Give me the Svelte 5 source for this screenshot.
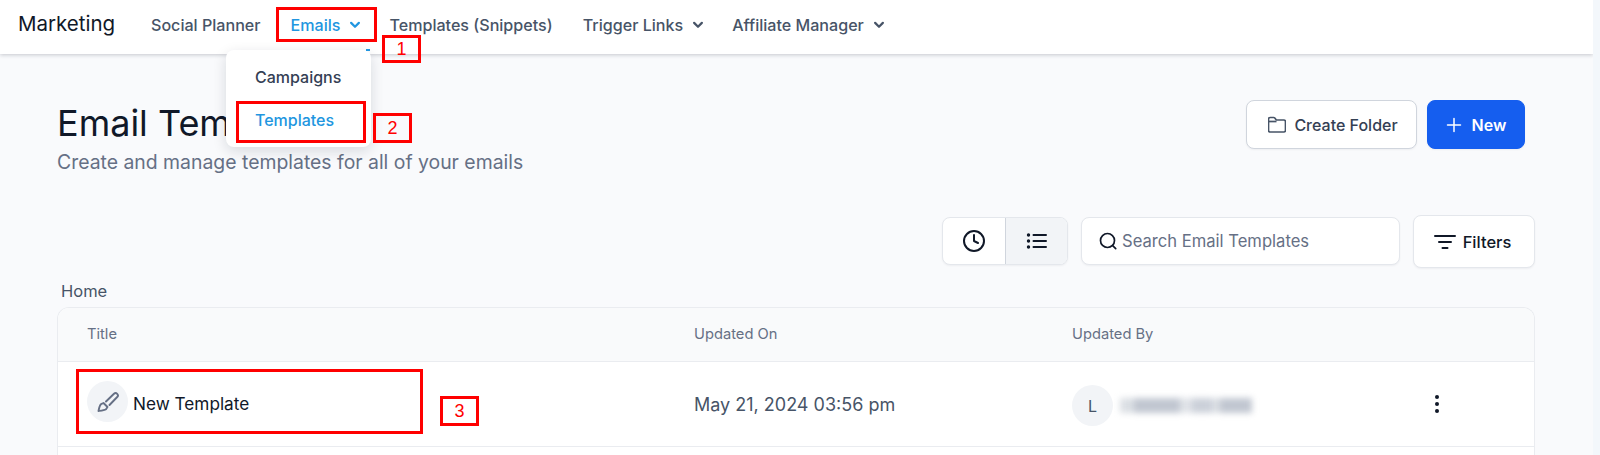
<script>
  const tabs = [
    { label: 'Social Planner' },
    { label: 'Emails', caret: true, active: true },
    { label: 'Templates (Snippets)' },
    { label: 'Trigger Links', caret: true },
    { label: 'Affiliate Manager', caret: true }
  ];
  const marks = [
    { n: 1, cls: 'tag-1' },
    { n: 2, cls: 'tag-2' },
    { n: 3, cls: 'tag-3' }
  ];
  const smudge = [
    { w: 14, o: 0.35 }, { w: 46, o: 0.6 }, { w: 12, o: 0.3 }, { w: 20, o: 0.5 }, { w: 8, o: 0.35 }, { w: 32, o: 0.6 }
  ];
</script>

<div class="page">
  <header class="topbar">
    <span class="brand">Marketing</span>
    <nav class="tabs">
      {#each tabs as tab}
        <span class="tab" class:active={tab.active}>
          {tab.label}
          {#if tab.caret}
            <svg width="12" height="8" viewBox="-1 0 14 8" fill="none">
              <path d="M1.500 1.500 6 6l4.500-4.500" stroke="currentColor" stroke-width="2.600" stroke-linecap="round" stroke-linejoin="round" />
            </svg>
          {/if}
        </span>
      {/each}
    </nav>
  </header>

  <main class="content">
    <div class="head">
      <div>
        <h1>Email Templates</h1>
        <p>Create and manage templates for all of your emails</p>
      </div>
      <div class="head-actions">
        <button class="btn folder">
          <svg width="18" height="20" viewBox="1 0 18 20" fill="none" stroke="#475467" stroke-width="1.700" stroke-linejoin="round">
            <path d="M1.500 4.200c0-1 .7-1.700 1.700-1.700h3.400c.5 0 .9.2 1.200.5l1.500 2h7.500c1 0 1.700.7 1.700 1.700v8.600c0 1-.7 1.700-1.700 1.700H3.200c-1 0-1.700-.7-1.700-1.700z" />
            <path d="M1.500 6.500h8" />
          </svg>
          Create Folder
        </button>
        <button class="btn primary">
          <svg width="16" height="16" viewBox="0 0 16 16" fill="none" stroke="#fff" stroke-width="1.500" stroke-linecap="round">
            <path d="M8 1.500v13M1.500 8h13" />
          </svg>
          New
        </button>
      </div>
    </div>

    <div class="toolbar">
      <div class="segment">
        <span class="seg">
          <svg width="24" height="24" viewBox="0 0 24 24" fill="none" stroke="#101828" stroke-width="2" stroke-linecap="round" stroke-linejoin="round">
            <circle cx="12" cy="12" r="10" />
            <path d="M12 6v6l4 2" />
          </svg>
        </span>
        <span class="seg on">
          <svg width="24" height="24" viewBox="0 0 24 24" fill="none" stroke="#101828" stroke-width="2" stroke-linecap="round">
            <path d="M8.500 6H21M8.500 12H21M8.500 18H21" />
            <path d="M3.500 6h.01M3.500 12h.01M3.500 18h.01" stroke-width="3.400" />
          </svg>
        </span>
      </div>
      <div class="search">
        <svg width="20" height="20" viewBox="0 0 20 20" fill="none" stroke="#101828" stroke-width="1.700" stroke-linecap="round">
          <circle cx="9.500" cy="9.500" r="7" />
          <path d="m14.700 14.700 3 3" />
        </svg>
        <span>Search Email Templates</span>
      </div>
      <button class="btn filters">
        <svg width="22" height="22" viewBox="0 0 22 22" fill="none" stroke="#101828" stroke-width="2" stroke-linecap="round">
          <path d="M1 5h20M5 11h12M8.500 17h5" />
        </svg>
        Filters
      </button>
    </div>

    <div class="crumb">Home</div>

    <div class="table">
      <div class="row thead">
        <span class="col-title">Title</span>
        <span class="col-date">Updated On</span>
        <span class="col-user">Updated By</span>
      </div>
      <div class="row tbody">
        <span class="col-title name">
          <span class="avatar brush">
            <svg width="24" height="24" viewBox="0 0 24 24" fill="none" stroke="#667085" stroke-width="1.900" stroke-linecap="round" stroke-linejoin="round">
              <path d="M10 11.500 18 3.800a2.200 2.200 0 0 1 3.200 3.200L13.500 15" />
              <path d="M7.500 13l4 4-1.500 2.200c-1.500 1-4 1.300-7.500 1.800.5-3 1-5.500 2.500-6.800z" />
            </svg>
          </span>
          New Template
        </span>
        <span class="col-date when">May 21, 2024 03:56 pm</span>
        <span class="col-user who">
          <span class="avatar small">L</span>
          <span class="smudge">
            {#each smudge as s}
              <i style="width: {s.w}px; opacity: {s.o}"></i>
            {/each}
          </span>
        </span>
        <span class="dots"><i></i><i></i><i></i></span>
      </div>
    </div>
  </main>

  <!-- dropdown and the screenshot's red markup sit over the page -->
  <div class="menu">
    <span class="menu-item">Campaigns</span>
    <span class="menu-item current">Templates</span>
  </div>
  <span class="tick"></span>
  <span class="box box-1"></span>
  <span class="box box-2"></span>
  <span class="box box-3"></span>
  {#each marks as m}
    <span class="tag {m.cls}">{m.n}</span>
  {/each}
</div>

<style>
  :global(body) {
    margin: 0;
    background: #f3f7fb;
    font-family: Inter, "Liberation Sans", sans-serif;
    overflow: hidden;
  }
  .page {
    position: relative;
    width: 1593px;
    height: 455px;
    overflow: hidden;
    box-sizing: border-box;
    background: #f9fafc;
  }
  .topbar {
    display: flex;
    align-items: center;
    height: 54px;
    padding-left: 18px;
    background: #fff;
    box-shadow: 0 1px 4px rgba(16, 24, 40, 0.22);
  }
  .brand {
    font-size: 20.500px;
    font-weight: 400;
    color: #101828;
    margin-top: -8px;
    width: 133px;
  }
  .tabs {
    display: flex;
    align-items: center;
    gap: 30px;
    margin-top: -4px;
  }
  .tab {
    display: flex;
    align-items: center;
    gap: 9px;
    font-size: 16.100px;
    font-weight: 500;
    color: #475467;
  }
  .tab svg {
    margin-right: -2px;
  }
  .tab.active {
    color: #2196e0;
  }
  .content {
    padding: 47px 58px 0 57px;
  }
  .head {
    display: flex;
    justify-content: space-between;
    align-items: flex-start;
  }
  h1 {
    margin: 0;
    font-size: 36px;
    line-height: 44px;
    font-weight: 400;
    color: #101828;
  }
  .head p {
    margin: 5px 0 0;
    font-size: 19.400px;
    line-height: 24px;
    color: #667085;
  }
  .head-actions {
    display: flex;
    gap: 10px;
    margin: -1px 10px 0 0;
  }
  .btn {
    display: flex;
    align-items: center;
    justify-content: center;
    gap: 8px;
    height: 49px;
    border: 1px solid #d0d5dd;
    border-radius: 8px;
    background: #fff;
    font: 500 16px Inter, "Liberation Sans", sans-serif;
    color: #344054;
    box-shadow: 0 1px 2px rgba(16, 24, 40, 0.05);
  }
  .folder {
    width: 171px;
    padding: 0 0 0 3px;
  }
  .primary {
    width: 98px;
    background: #155eef;
    border-color: #155eef;
    color: #fff;
    font-weight: 600;
    gap: 10px;
  }
  .toolbar {
    display: flex;
    align-items: center;
    justify-content: flex-end;
    margin-top: 41px;
    height: 53px;
  }
  .segment {
    display: flex;
    width: 126px;
    height: 48px;
    margin-bottom: 1px;
    box-sizing: border-box;
    border: 1px solid #e4e7ec;
    border-radius: 8px;
    background: #fff;
    overflow: hidden;
    box-shadow: 0 1px 2px rgba(16, 24, 40, 0.05);
  }
  .seg {
    display: flex;
    align-items: center;
    justify-content: center;
    flex: 1 0 50%;
  }
  .seg.on {
    background: #f2f4f7;
    border-left: 1px solid #d0d5dd;
  }
  .search {
    display: flex;
    align-items: center;
    gap: 4px;
    box-sizing: border-box;
    width: 319px;
    height: 48px;
    margin: 0 0 1px 13px;
    padding-left: 16px;
    border: 1px solid #e4e7ec;
    border-radius: 8px;
    background: #fff;
    font-size: 16.600px;
    color: #667085;
    box-shadow: 0 1px 2px rgba(16, 24, 40, 0.05);
  }
  .filters {
    box-sizing: border-box;
    width: 122px;
    height: 53px;
    margin-left: 13px;
    padding: 0 3px 0 0;
    border-color: #e4e7ec;
    color: #101828;
    font-size: 16.500px;
    gap: 7px;
  }
  .crumb {
    margin: 13px 0 0 4px;
    font-size: 16.500px;
    line-height: 20px;
    color: #475467;
  }
  .table {
    margin-top: 6px;
    border: 1px solid #eaecf0;
    border-bottom: 0;
    border-radius: 12px 12px 0 0;
    background: #fff;
    height: 148px;
    overflow: hidden;
  }
  .row {
    display: flex;
    align-items: center;
    border-bottom: 1px solid #eaecf0;
    padding-left: 29px;
  }
  .thead {
    box-sizing: border-box;
    height: 54px;
    padding-bottom: 2px;
    background: #f9fafb;
    font-size: 14.700px;
    font-weight: 400;
    color: #667085;
  }
  .tbody {
    height: 84px;
  }
  .col-title {
    width: 607px;
    flex: none;
  }
  .col-date {
    width: 378px;
    flex: none;
  }
  .col-user {
    flex: none;
  }
  .name {
    display: flex;
    align-items: center;
    gap: 5px;
    font-size: 17.200px;
    font-weight: 400;
    color: #101828;
    margin-top: -1px;
  }
  .avatar {
    display: flex;
    align-items: center;
    justify-content: center;
    width: 41px;
    height: 41px;
    border-radius: 50%;
    background: #f2f4f7;
  }
  .avatar.brush {
    margin-top: -4px;
  }
  .avatar.small {
    font-size: 16px;
    color: #475467;
  }
  .when {
    font-size: 18px;
    font-weight: 400;
    color: #475467;
  }
  .who {
    display: flex;
    align-items: center;
    gap: 7px;
    width: 363px;
    margin-top: 3px;
  }
  .smudge {
    display: flex;
    width: 132px;
    height: 15px;
    filter: blur(3px);
  }
  .smudge i {
    display: block;
    background: #98a2b3;
  }
  .dots {
    display: flex;
    flex-direction: column;
    gap: 3px;
  }
  .dots i {
    display: block;
    width: 4px;
    height: 4px;
    border-radius: 50%;
    background: #101828;
  }
  .menu {
    position: absolute;
    left: 226px;
    top: 50px;
    width: 145px;
    height: 97px;
    padding: 6px 0;
    box-sizing: border-box;
    display: flex;
    flex-direction: column;
    background: #fff;
    border-radius: 8px;
    box-shadow: 0 4px 14px rgba(16, 24, 40, 0.14);
  }
  .menu-item {
    height: 43px;
    line-height: 43px;
    padding-left: 29px;
    font-size: 16px;
    font-weight: 500;
    color: #344054;
  }
  .menu-item.current {
    color: #2196e0;
  }
  .tick {
    position: absolute;
    left: 366px;
    top: 49px;
    width: 4px;
    height: 2px;
    background: #2196e0;
  }
  .box {
    position: absolute;
    box-sizing: border-box;
    border: 3px solid #f00;
  }
  .box-1 {
    left: 276px;
    top: 7px;
    width: 101px;
    height: 35px;
  }
  .box-2 {
    left: 236px;
    top: 101px;
    width: 130px;
    height: 42px;
  }
  .box-3 {
    left: 76px;
    top: 369px;
    width: 347px;
    height: 65px;
  }
  .tag {
    position: absolute;
    box-sizing: border-box;
    display: flex;
    align-items: center;
    justify-content: center;
    width: 39px;
    height: 30px;
    border: 3px solid #f00;
    color: #f00;
    font: 18px "Liberation Sans", sans-serif;
  }
  .tag-1 {
    left: 382px;
    top: 35px;
    height: 28px;
  }
  .tag-2 {
    left: 373px;
    top: 113px;
  }
  .tag-3 {
    left: 440px;
    top: 396px;
  }
</style>
